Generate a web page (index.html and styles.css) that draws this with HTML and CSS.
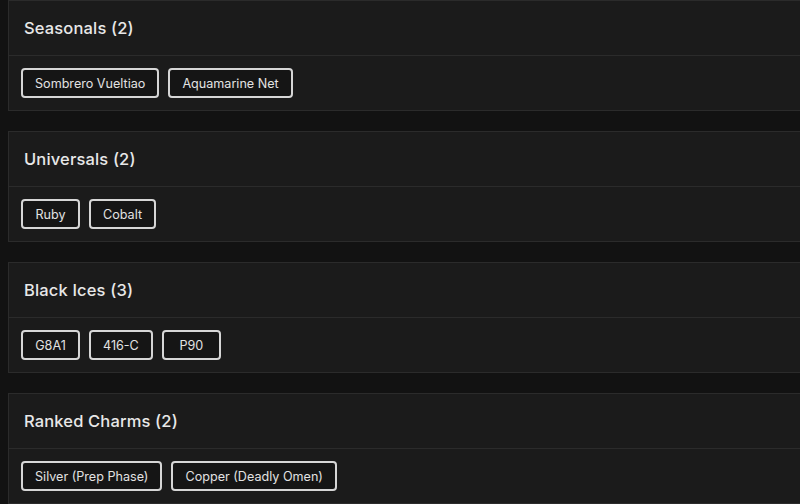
FILE: index.html
```html
<!DOCTYPE html>
<html lang="en">
<head>
<meta charset="utf-8">
<title>Collection</title>
<link rel="stylesheet" href="styles.css">
</head>
<body>
<main class="page">
  <section class="card">
    <header class="card-head"><h2 class="card-title">Seasonals (2)</h2></header>
    <div class="card-body">
      <span class="chip">Sombrero Vueltiao</span>
      <span class="chip">Aquamarine Net</span>
    </div>
  </section>
  <section class="card">
    <header class="card-head"><h2 class="card-title">Universals (2)</h2></header>
    <div class="card-body">
      <span class="chip">Ruby</span>
      <span class="chip">Cobalt</span>
    </div>
  </section>
  <section class="card">
    <header class="card-head"><h2 class="card-title">Black Ices (3)</h2></header>
    <div class="card-body">
      <span class="chip">G8A1</span>
      <span class="chip">416-C</span>
      <span class="chip">P90</span>
    </div>
  </section>
  <section class="card">
    <header class="card-head"><h2 class="card-title">Ranked Charms (2)</h2></header>
    <div class="card-body">
      <span class="chip">Silver (Prep Phase)</span>
      <span class="chip">Copper (Deadly Omen)</span>
    </div>
  </section>
</main>
</body>
</html>
```

FILE: styles.css
```css
html {
  overflow: hidden;
  background: #121212;
}
body {
  margin: 0;
  background: #121212;
  font-family: Inter, "Open Sans", "Liberation Sans", sans-serif;
  color: #e6e6e6;
}
.page {
  display: flex;
  flex-direction: column;
  gap: 20px;
  padding-left: 8px;
  width: 830px;
}
.card {
  background: #1b1b1b;
  border: 1px solid #2b2b2b;
}
.card-head {
  height: 54px;
  display: flex;
  align-items: center;
  padding: 0 15px;
  border-bottom: 1px solid #2b2b2b;
}
.card-title {
  margin: 0;
  font-size: 16.5px;
  font-weight: 500;
  color: #e8e8e8;
  letter-spacing: 0.15px;
}
.card-body {
  display: flex;
  gap: 9px;
  padding: 12px;
  height: 30px;
}
.chip {
  display: flex;
  align-items: center;
  justify-content: center;
  box-sizing: border-box;
  min-width: 59px;
  height: 30px;
  padding: 0 12px;
  border: 2px solid #d6d6d6;
  border-radius: 4px;
  background: #151515;
  font-size: 12.6px;
  color: #e2e2e2;
}
```
